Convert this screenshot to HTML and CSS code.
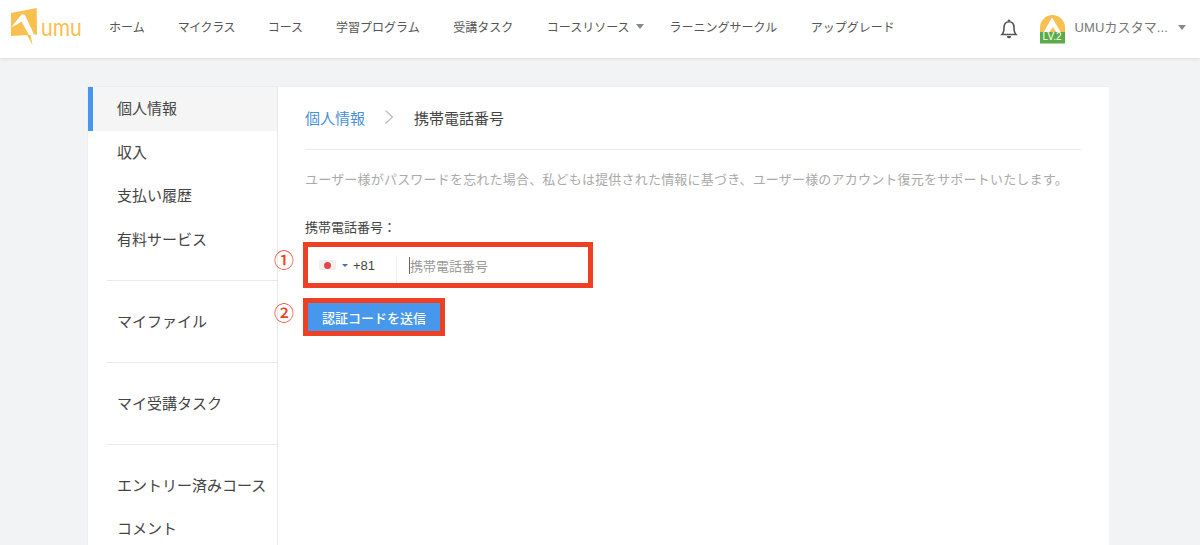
FILE: index.html
```html
<!DOCTYPE html>
<html lang="ja">
<head>
<meta charset="utf-8">
<title>携帯電話番号</title>
<link rel="stylesheet" href="styles.css">
</head>
<body>
<header class="topbar">
  <div class="logo">
    <svg class="logo-mark" width="27" height="37" viewBox="0 0 27 37"><path fill="#f8c04f" d="M0 5 L25.7 0 L26 26.5 L0 28 Z"/><path fill="#fff" d="M0 19.5 L11 6 L14 7 L23.5 27.5 L18.5 28 L10.5 13.5 L6 16.5 Z"/><path fill="#f8c04f" d="M16 27 L19.5 27 L21.5 37 Z"/></svg>
    <span class="logo-text">umu</span>
  </div>
  <nav class="nav">
    <a class="nav-item">ホーム</a>
    <a class="nav-item nav-tight">マイクラス</a>
    <a class="nav-item">コース</a>
    <a class="nav-item nav-wide">学習プログラム</a>
    <a class="nav-item nav-wide">受講タスク</a>
    <a class="nav-item nav-caret">コースリソース<i class="caret"></i></a>
    <a class="nav-item nav-wide">ラーニングサークル</a>
    <a class="nav-item">アップグレード</a>
  </nav>
  <div class="user">
    <svg class="bell" width="18" height="20" viewBox="0 0 18 20"><path fill="none" stroke="#555" stroke-width="1.6" d="M2 15.5 C4 13.5 4 12 4 8.5 C4 5 6 2.8 9 2.8 C12 2.8 14 5 14 8.5 C14 12 14 13.5 16 15.5 Z"/><path fill="#555" d="M9 0.5 a1.3 1.3 0 0 1 1.3 1.6 h-2.6 A1.3 1.3 0 0 1 9 0.5 Z M6.8 17 h4.4 a2.2 2.2 0 0 1 -4.4 0 Z"/></svg>
    <div class="avatar">
      <svg width="25" height="29" viewBox="0 0 25 29"><path fill="#f8c04f" d="M0 19 V12.5 A12.5 12.5 0 0 1 25 12.5 V19 Z"/><path fill="#fff" d="M3.5 17.5 L12 2.5 L21 17.5 Z"/><path fill="#f8c04f" d="M9 17.5 L13 12 L16.5 17.5 Z"/><rect y="17" width="25" height="11.5" fill="#5cab48"/></svg>
      <span class="level">LV.2</span>
    </div>
    <span class="user-name">UMUカスタマ...</span>
    <i class="caret caret-user"></i>
  </div>
</header>
<main class="page">
  <div class="panel">
    <aside class="side">
      <a class="side-item active">個人情報</a>
      <a class="side-item">収入</a>
      <a class="side-item">支払い履歴</a>
      <a class="side-item">有料サービス</a>
      <div class="side-sep"></div>
      <a class="side-item">マイファイル</a>
      <div class="side-sep"></div>
      <a class="side-item">マイ受講タスク</a>
      <div class="side-sep"></div>
      <a class="side-item">エントリー済みコース</a>
      <a class="side-item">コメント</a>
    </aside>
    <section class="content">
      <div class="crumbs">
        <a class="crumb-link">個人情報</a>
        <svg class="crumb-arrow" width="10" height="16" viewBox="0 0 10 16"><path fill="none" stroke="#bbb" stroke-width="1.2" d="M1.5 1.5 L8.5 8 L1.5 14.5"/></svg>
        <span class="crumb-now">携帯電話番号</span>
      </div>
      <p class="note">ユーザー様がパスワードを忘れた場合、私どもは提供された情報に基づき、ユーザー様のアカウント復元をサポートいたします。</p>
      <div class="field-label">携帯電話番号：</div>
      <div class="form-row">
        <span class="mark mark-1">①</span>
        <div class="phone-box">
          <div class="country">
            <span class="flag"><i class="flag-dot"></i></span>
            <i class="mini-caret"></i>
            <span class="code">+81</span>
          </div>
          <span class="cursor"></span>
          <span class="placeholder">携帯電話番号</span>
        </div>
      </div>
      <div class="form-row form-row-btn">
        <span class="mark mark-2">②</span>
        <div class="btn-box"><button class="send">認証コードを送信</button></div>
      </div>
    </section>
  </div>
</main>
</body>
</html>
```
FILE: styles.css
```css
* { box-sizing: border-box; }
html, body { margin: 0; height: 545px; overflow: hidden; }
body {
  background: #f2f3f5;
  font-family: "Liberation Sans", "Noto Sans CJK JP", sans-serif;
  color: #444;
}
.topbar {
  height: 58px;
  background: #fff;
  box-shadow: 0 1px 3px rgba(0,0,0,.1);
  display: flex;
  align-items: center;
  padding-left: 11px;
  position: relative;
}
.logo { display: flex; align-items: center; width: 98px; }
.logo-mark { margin-bottom: 5px; flex: none; }
.logo-text {
  font-family: "Lato", sans-serif;
  color: #f8c04f;
  font-size: 21px;
  line-height: 20px;
  margin-left: 3px;
  margin-bottom: 6px;
  transform: scaleY(1.2);
}
.nav { display: flex; align-items: center; padding-bottom: 6px; }
.nav-item { font-size: 12px; color: #555; margin-right: 33px; white-space: nowrap; display: flex; align-items: center; }
.nav-tight { letter-spacing: -.4px; margin-right: 32.5px; }
.nav-wide { margin-right: 33.5px; }
.nav-caret { margin-right: 26px; }
.caret {
  display: inline-block;
  width: 0; height: 0;
  border-left: 4.5px solid transparent;
  border-right: 4.5px solid transparent;
  border-top: 5px solid #888;
  margin-left: 6px;
}
.user { margin-left: auto; display: flex; align-items: center; padding-right: 14px; }
.caret-user { margin-left: 10px; margin-bottom: 3px; }
.bell { margin-right: 22px; margin-top: -1px; }
.avatar { position: relative; width: 25px; height: 29px; margin-right: 10px; }
.avatar svg { display: block; }
.level {
  position: absolute;
  left: 0; right: 0; bottom: 1.5px;
  text-align: center;
  font-size: 10px;
  line-height: 11px;
  color: #fff;
}
.user-name { font-size: 13px; color: #777; white-space: nowrap; padding-bottom: 6px; letter-spacing: .1px; }
.page { padding: 28px 91px 0 87px; }
.panel { display: flex; background: #fff; height: 600px; border: 1px solid #eceef0; border-width: 1px 0 0 1px; }
.side { width: 190px; flex: none; border-right: 1px solid #e8e9eb; }
.side-item {
  display: block;
  height: 43.5px;
  line-height: 43px;
  padding-left: 29px;
  font-size: 15px;
  color: #444;
  white-space: nowrap;
}
.side-item.active {
  background: #f5f5f5;
  border-left: 5px solid #4797f0;
  padding-left: 24px;
}
.side-sep { height: 1px; background: #e8e9eb; margin: 19px 0 18.6px 19px; }
.content { flex: 1; padding: 0 28px 0 27px; }
.crumbs {
  height: 63px;
  padding-bottom: 2px;
  display: flex;
  align-items: center;
  border-bottom: 1px solid #eaeaea;
  font-size: 15px;
}
.crumb-link { color: #4a8fdc; }
.crumb-arrow { margin: 0 19px 0 19px; }
.crumb-now { color: #444; margin-left: 1px; }
.note { margin: 21px 0 0; font-size: 13px; line-height: 18px; color: #aaa; white-space: nowrap; letter-spacing: .2px; }
.field-label { margin-top: 30px; font-size: 13px; line-height: 18px; color: #444; }
.form-row { position: relative; margin-top: 5px; }
.form-row-btn { margin-top: 10px; }
.mark { position: absolute; left: -31px; font-size: 20px; font-weight: 500; color: #e9432a; line-height: 24px; top: 7px; }
.mark-2 { top: 4px; }
.phone-box {
  width: 290px;
  height: 46px;
  margin-left: -2px;
  border: 5px solid #ee4023;
  display: flex;
  align-items: center;
  background: #fff;
  position: relative;
}
.country {
  width: 89px;
  height: 26px;
  display: flex;
  align-items: center;
  padding-left: 11px;
  border-right: 1px solid #eee;
  margin-top: 10px;
  padding-bottom: 10px;
}
.flag {
  width: 17px; height: 10px;
  background: #f0f0f0;
  display: flex; align-items: center; justify-content: center;
}
.flag-dot { width: 7px; height: 7px; border-radius: 50%; background: #e8454a; }
.mini-caret {
  width: 0; height: 0;
  border-left: 3px solid transparent;
  border-right: 3px solid transparent;
  border-top: 3px solid #4a6fb0;
  margin-left: 6px;
}
.code { font-size: 13px; color: #444; margin-left: 5px; }
.cursor { width: 1px; height: 17px; background: #666; margin-left: 12px; }
.placeholder { font-size: 13px; color: #999; white-space: nowrap; }
.btn-box { display: inline-block; margin-left: -2px; border: 5px solid #ee4023; line-height: 0; }
.send {
  display: block;
  width: 132px;
  height: 28px;
  border: 0;
  padding: 0;
  background: #4797ec;
  color: #fff;
  font: 500 13px "Liberation Sans", "Noto Sans CJK JP", sans-serif;
}
```
